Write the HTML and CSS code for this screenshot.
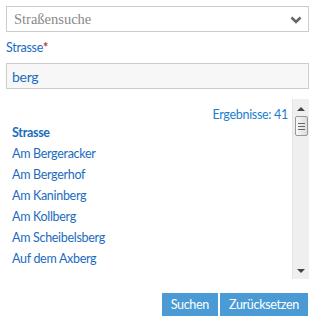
FILE: index.html
```html
<!DOCTYPE html>
<html lang="de">
<head>
<meta charset="utf-8">
<link rel="stylesheet" href="styles.css">
</head>
<body>
<div class="panel">
  <div class="select">
    <span class="select-text">Straßensuche</span>
    <svg class="chev" width="12" height="8" viewBox="0 0 12 8"><path d="M1.5 1.5 L6 6 L10.5 1.5" fill="none" stroke="#666" stroke-width="2.6"/></svg>
  </div>
  <div class="label">Strasse<span class="req">*</span></div>
  <div class="input">berg</div>
  <div class="results">
    <div class="list">
      <div class="count">Ergebnisse: 41</div>
      <div class="head">Strasse</div>
      <div class="item">Am Bergeracker</div>
      <div class="item">Am Bergerhof</div>
      <div class="item">Am Kaninberg</div>
      <div class="item">Am Kollberg</div>
      <div class="item">Am Scheibelsberg</div>
      <div class="item">Auf dem Axberg</div>
    </div>
    <div class="scrollbar">
      <div class="arrow up"></div>
      <div class="thumb"><span></span><span></span><span></span></div>
      <div class="track"></div>
      <div class="arrow down"></div>
    </div>
  </div>
  <div class="buttons">
    <div class="btn">Suchen</div>
    <div class="btn">Zurücksetzen</div>
  </div>
</div>
</body>
</html>
```
FILE: styles.css
```css
html, body { margin: 0; padding: 0; background: #fff; }
body { font-family: Lato, "Open Sans", sans-serif; letter-spacing: -0.3px; }
.panel { padding: 6px 10px 0 6px; width: 303px; }
.select {
  height: 24px; border: 1px solid #ccc; display: flex; align-items: center;
  justify-content: space-between; padding: 0 6px 0 7px;
}
.select-text { font-family: "Liberation Serif", serif; font-size: 14.5px; color: #888; letter-spacing: 0; }
.chev { margin-top: 1px; }
.label { margin-top: 8px; font-size: 12.5px; color: #1b6cc0; line-height: 16px; }
.req { color: #c0392b; font-weight: bold; }
.input {
  margin-top: 7px; height: 24px; border: 1px solid #ccc; background: #f7f7f7;
  font-size: 14px; color: #1b6cc0; display: flex; align-items: center; padding-left: 5px;
}
.results { margin-top: 10px; height: 180px; display: flex; }
.list { flex: 1; padding: 8px 4px 0 6px; overflow: hidden; }
.count { text-align: right; font-size: 12.5px; color: #1b7ed0; line-height: 16px; }
.head { font-size: 12.5px; font-weight: bold; color: #1b6cc0; line-height: 21px; margin-top: -1px; }
.item { font-size: 12.5px; color: #1b6cc0; line-height: 21px; }
.scrollbar { width: 16px; background: #efefef; border-left: 1px solid #e4e4e4; display: flex; flex-direction: column; align-items: center; }
.arrow { width: 0; height: 0; border-left: 4px solid transparent; border-right: 4px solid transparent; }
.arrow.up { border-bottom: 4px solid #444; margin-top: 8px; }
.arrow.down { border-top: 4px solid #444; margin-bottom: 6px; }
.thumb {
  margin-top: 5px; width: 13px; height: 20px; box-sizing: border-box; border: 1px solid #999;
  border-radius: 2px; background: linear-gradient(to right, #f8f8f8, #dcdcdc);
  display: flex; flex-direction: column; align-items: center; justify-content: center; gap: 2px;
}
.thumb span { display: block; width: 7px; height: 1px; background: #666; }
.track { flex: 1; }
.buttons { margin-top: 14px; display: flex; justify-content: flex-end; gap: 2px; padding-right: 1px; }
.btn {
  background: #4a9bd5; color: #fff; font-size: 12.5px; height: 23px; line-height: 23px;
  padding: 0 9px;
}
```
